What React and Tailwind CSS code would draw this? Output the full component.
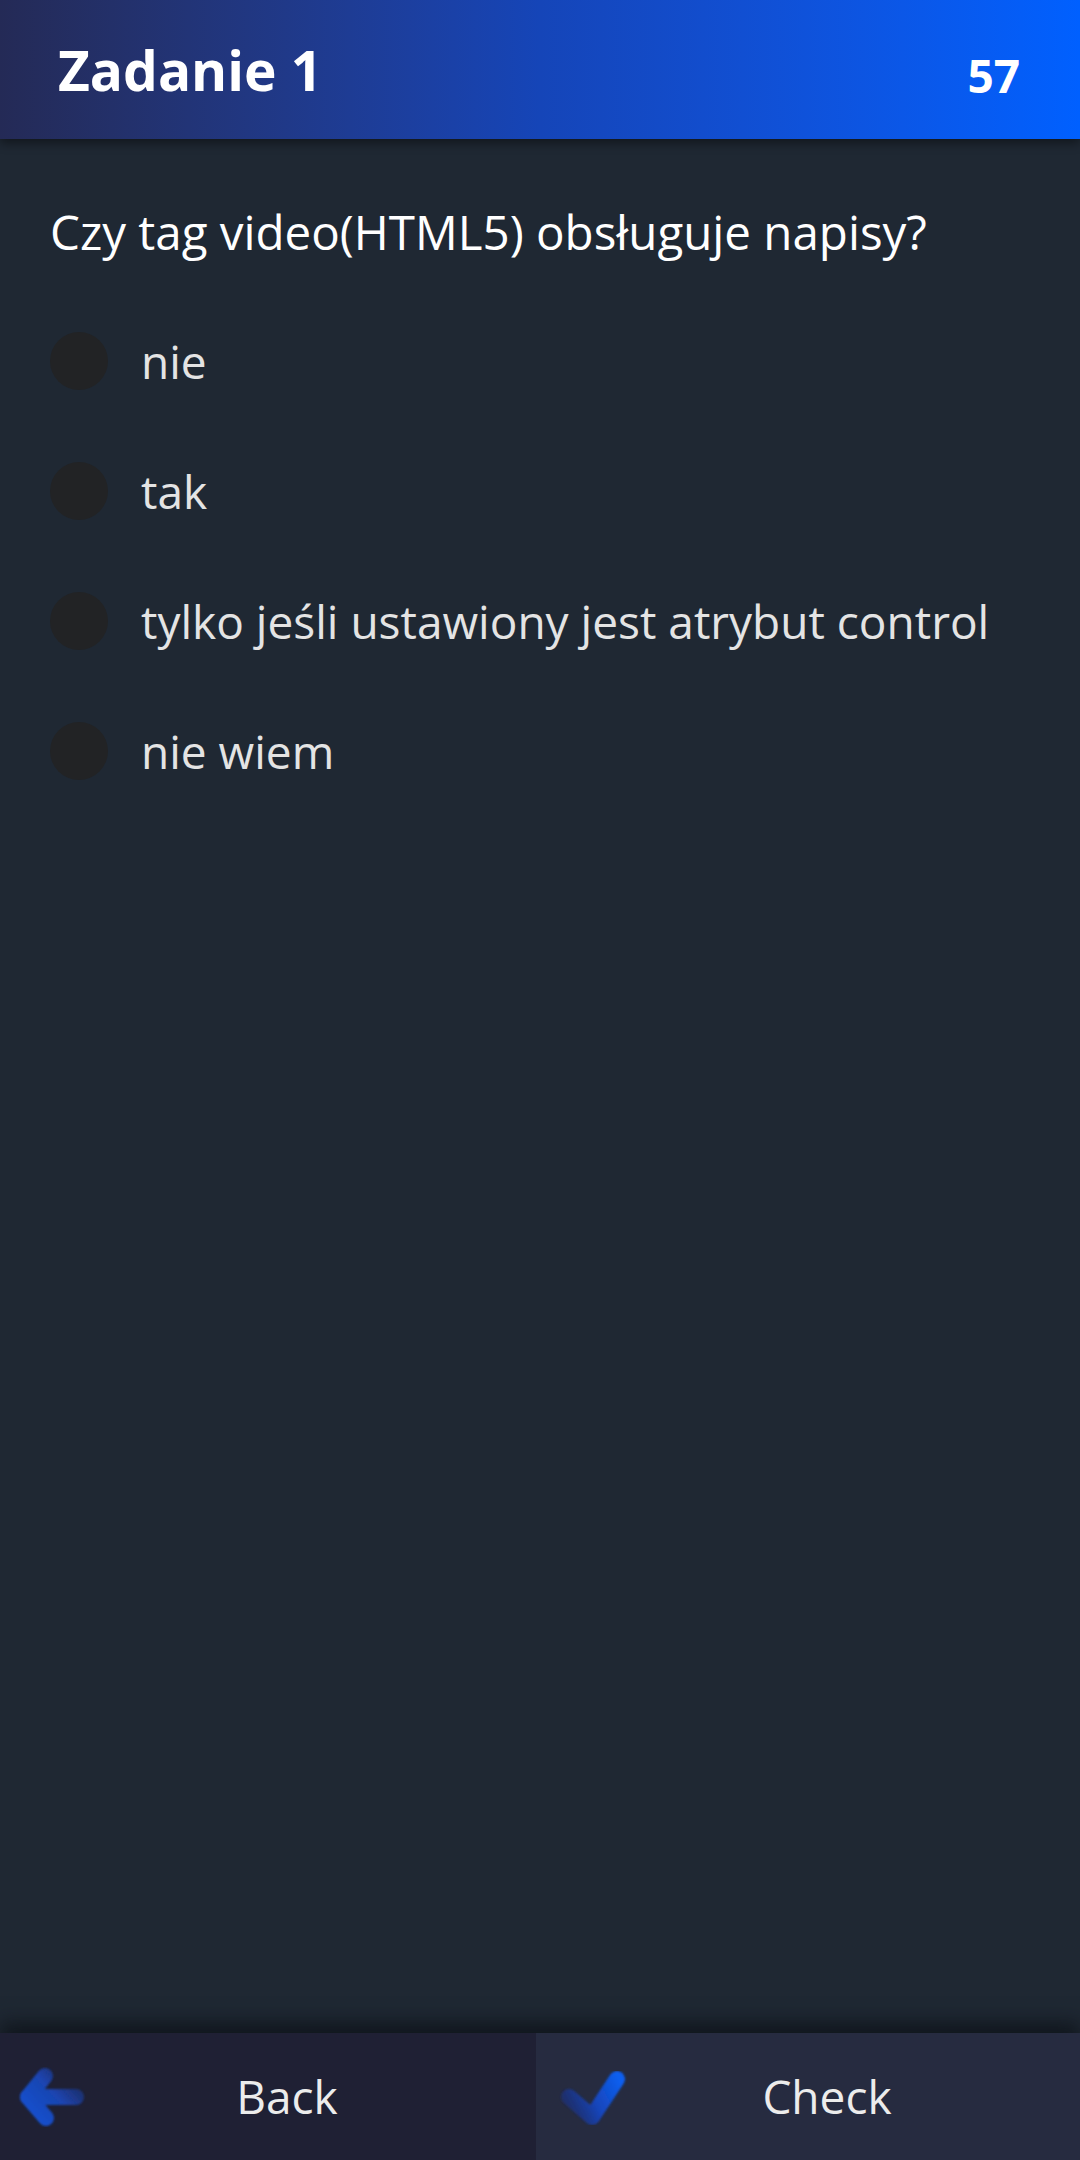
const options = ['nie', 'tak', 'tylko jeśli ustawiony jest atrybut control', 'nie wiem'];

function BackIcon() {
  return (
    <svg width="80" height="70" viewBox="0 0 80 70" className="shrink-0">
      <defs>
        <linearGradient id="backGrad" gradientUnits="userSpaceOnUse" x1="10" y1="60" x2="64" y2="10">
          <stop offset="0" stopColor="#1553d6" />
          <stop offset="0.55" stopColor="#1a44b0" />
          <stop offset="1" stopColor="#1f2f70" stopOpacity="0.6" />
        </linearGradient>
        <filter id="soft1" x="-20%" y="-20%" width="140%" height="140%">
          <feGaussianBlur stdDeviation="1.2" />
        </filter>
      </defs>
      <g filter="url(#soft1)" fill="none" stroke="url(#backGrad)" strokeWidth="16" strokeLinecap="round" strokeLinejoin="round">
        <path d="M29 14 L12 35 L30 56" />
        <path d="M12 35 L60 35" />
      </g>
    </svg>
  );
}

function CheckIcon() {
  return (
    <svg width="80" height="70" viewBox="0 0 80 70" className="shrink-0">
      <defs>
        <linearGradient id="checkGrad" gradientUnits="userSpaceOnUse" x1="14" y1="45" x2="68" y2="18">
          <stop offset="0" stopColor="#1e2f78" stopOpacity="0.7" />
          <stop offset="0.45" stopColor="#1744b8" />
          <stop offset="1" stopColor="#0a5ff0" />
        </linearGradient>
        <filter id="soft2" x="-20%" y="-20%" width="140%" height="140%">
          <feGaussianBlur stdDeviation="1.2" />
        </filter>
      </defs>
      <g filter="url(#soft2)" fill="none" stroke="url(#checkGrad)" strokeWidth="16" strokeLinecap="round" strokeLinejoin="round">
        <path d="M17 35 L40 55 L65 17" />
      </g>
    </svg>
  );
}

export default function App() {
  return (
    <div
      className="w-[1080px] h-[2160px] flex flex-col bg-[#1f2833] overflow-hidden"
      style={{ fontFamily: '"Open Sans", Lato, sans-serif' }}
    >
      <header className="h-[139px] shrink-0 flex items-center justify-between pl-[58px] pr-[60px] bg-gradient-to-r from-[#242a56] via-[#1545b8] to-[#0060ff] shadow-[0_4px_10px_rgba(0,0,0,0.45)] relative z-10">
        <h1 className="text-[55px] font-bold text-white leading-none">Zadanie 1</h1>
        <span className="text-[46px] font-bold text-white leading-none mt-[10px]">57</span>
      </header>

      <main className="flex-1 px-[50px] pt-[60px]">
        <p className="text-[47.5px] text-white leading-[1.4]">Czy tag video(HTML5) obsługuje napisy?</p>
        <ul className="mt-[66px] flex flex-col gap-[72px]">
          {options.map((o) => (
            <li key={o} className="flex items-center gap-[33px]">
              <span className="w-[58px] h-[58px] rounded-full bg-[#222325] shrink-0" />
              <span className="text-[46px] text-[#e4e4e4] leading-none">{o}</span>
            </li>
          ))}
        </ul>
      </main>

      <footer className="h-[127px] shrink-0 flex shadow-[0_-10px_18px_rgba(10,14,20,0.7)] relative">
        <button className="w-[536px] flex items-center pl-[16px] bg-[#1f2034]">
          <BackIcon />
          <span className="flex-1 text-center text-[46px] text-[#ececec] -ml-[58px]">Back</span>
        </button>
        <button className="flex-1 flex items-center pl-[16px] bg-[#262b40]">
          <CheckIcon />
          <span className="flex-1 text-center text-[46px] text-[#ececec] -ml-[58px]">Check</span>
        </button>
      </footer>
    </div>
  );
}
